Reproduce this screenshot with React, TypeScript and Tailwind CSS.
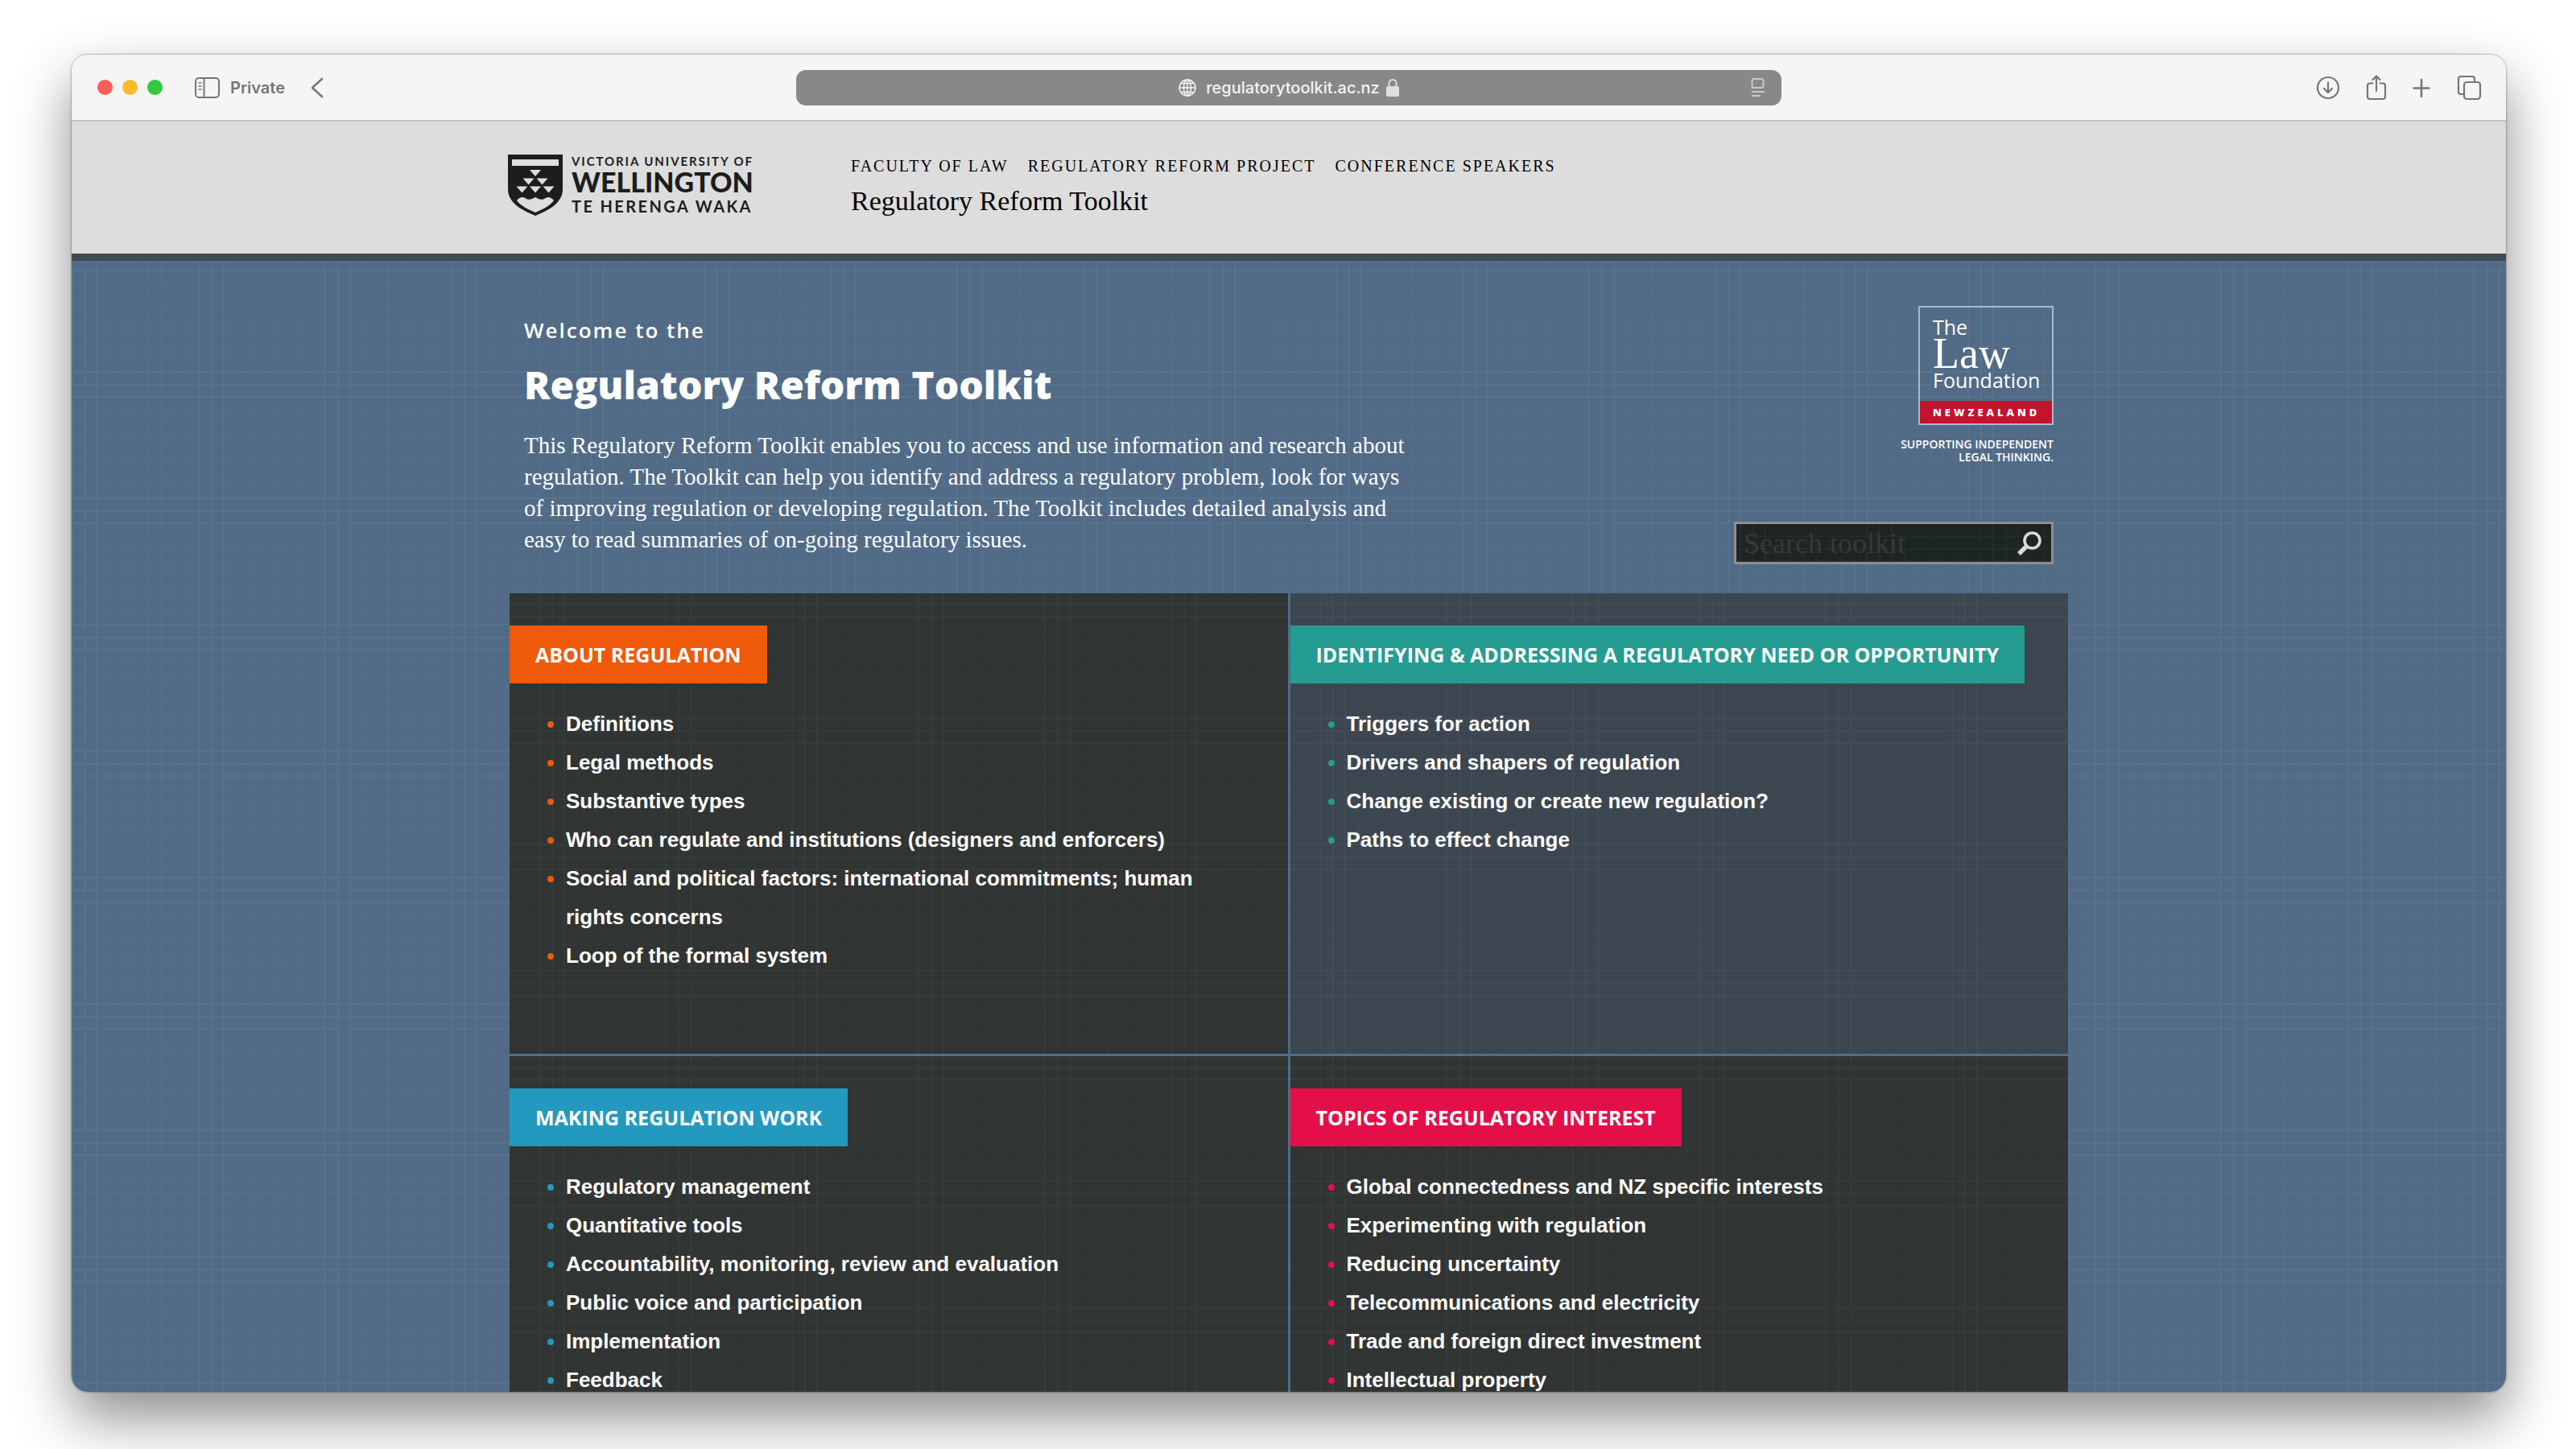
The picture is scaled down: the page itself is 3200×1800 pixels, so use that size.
import { ReactNode } from "react";

interface Topic {
    title: string;
    tag: string;
    dot: string;
    panel: string;
    items: string[];
}

const topics: Topic[] = [
    {
        title: "About regulation",
        tag: "bg-[#ee5a0a]",
        dot: "marker:text-[#ee5a0a]",
        panel: "bg-[#303433]",
        items: [
            "Definitions",
            "Legal methods",
            "Substantive types",
            "Who can regulate and institutions (designers and enforcers)",
            "Social and political factors: international commitments; human rights concerns",
            "Loop of the formal system",
        ],
    },
    {
        title: "Identifying & addressing a regulatory need or opportunity",
        tag: "bg-[#259c91]",
        dot: "marker:text-[#259c91]",
        panel: "bg-[#3c4650]",
        items: [
            "Triggers for action",
            "Drivers and shapers of regulation",
            "Change existing or create new regulation?",
            "Paths to effect change",
        ],
    },
    {
        title: "Making regulation work",
        tag: "bg-[#2499c0]",
        dot: "marker:text-[#2499c0]",
        panel: "bg-[#303433]",
        items: [
            "Regulatory management",
            "Quantitative tools",
            "Accountability, monitoring, review and evaluation",
            "Public voice and participation",
            "Implementation",
            "Feedback",
        ],
    },
    {
        title: "Topics of regulatory interest",
        tag: "bg-[#e40f49]",
        dot: "marker:text-[#e40f49]",
        panel: "bg-[#303433]",
        items: [
            "Global connectedness and NZ specific interests",
            "Experimenting with regulation",
            "Reducing uncertainty",
            "Telecommunications and electricity",
            "Trade and foreign direct investment",
            "Intellectual property",
        ],
    },
];

const navLinks = ["Faculty of Law", "Regulatory Reform Project", "Conference Speakers"];

function ToolButton({ label, children }: { label: string; children: ReactNode }) {
    return (
        <button type="button" aria-label={label} className="text-[#767676]">
            {children}
        </button>
    );
}

function Toolbar() {
    return (
        <div className="grid h-[83px] shrink-0 grid-cols-[1fr_1224px_1fr] items-center border-b-2 border-[#c4c4c4] bg-[#f5f5f5] font-[Inter] text-[#767676]">
            <div className="flex items-center pl-8">
                <div className="flex gap-3">
                    <span className="size-[19px] rounded-full bg-[#fa5e57]" />
                    <span className="size-[19px] rounded-full bg-[#fcbb2e]" />
                    <span className="size-[19px] rounded-full bg-[#35c83f]" />
                </div>
                <button type="button" className="ml-10 flex items-center gap-3 text-xl font-semibold">
                    <svg width="32" height="26" viewBox="0 0 32 26" fill="none" stroke="currentColor" strokeWidth="2">
                        <rect x="1" y="1" width="29" height="24" rx="4" />
                        <path d="M11.500 1v24" />
                        <path d="M4.500 7h4M4.500 11h4M4.500 15h4" strokeWidth="1.500" />
                    </svg>
                    Private
                </button>
                <div className="ml-8 flex">
                    <ToolButton label="Back">
                        <svg width="16" height="26" viewBox="0 0 16 26" fill="none" stroke="currentColor" strokeWidth="2.600" strokeLinecap="round" strokeLinejoin="round">
                            <path d="M14 2 2 13l12 11" />
                        </svg>
                    </ToolButton>
                </div>
            </div>
            <div className="grid h-11 grid-cols-[1fr_auto_1fr] items-center rounded-xl bg-[#888888] px-5 text-[#f4f4f4]">
                <span />
                <div className="flex items-center gap-2">
                    <svg className="mr-1" width="22" height="22" viewBox="0 0 22 22" fill="none" stroke="currentColor" strokeWidth="1.500">
                        <circle cx="11" cy="11" r="10" />
                        <ellipse cx="11" cy="11" rx="4.500" ry="10" />
                        <path d="M11 1v20M1 11h20M3 5.500h16M3 16.500h16" />
                    </svg>
                    <span className="text-xl font-medium">regulatorytoolkit.ac.nz</span>
                    <svg className="text-[#dedede]" width="16" height="24" viewBox="0 0 16 24" fill="currentColor">
                        <rect y="10" width="16" height="13" rx="2" />
                        <path d="M3.500 10V6.500a4.500 4.500 0 0 1 9 0V10" fill="none" stroke="currentColor" strokeWidth="2" />
                    </svg>
                </div>
                <button type="button" aria-label="Page menu" className="justify-self-end text-[#c8c8c8]">
                    <svg width="18" height="24" viewBox="0 0 18 24" fill="none" stroke="currentColor" strokeWidth="2">
                        <rect x="1.500" y="1" width="14" height="11" rx="2.500" />
                        <path d="M1 17h16M1 22h11" />
                    </svg>
                </button>
            </div>
            <div className="flex items-center justify-end gap-8 pr-[30px]">
                <ToolButton label="Downloads">
                    <svg width="30" height="30" viewBox="0 0 30 30" fill="none" stroke="currentColor" strokeWidth="2.200" strokeLinecap="round" strokeLinejoin="round">
                        <circle cx="15" cy="15" r="13" />
                        <path d="M15 8.500v12M10 16l5 5 5-5" />
                    </svg>
                </ToolButton>
                <ToolButton label="Share">
                    <svg width="26" height="32" viewBox="0 0 26 32" fill="none" stroke="currentColor" strokeWidth="2.200" strokeLinecap="round" strokeLinejoin="round">
                        <path d="M8.500 10.500H5A3 3 0 0 0 2 13.500V27a3 3 0 0 0 3 3h16a3 3 0 0 0 3-3V13.500a3 3 0 0 0-3-3h-3.500" />
                        <path d="M13 20V2M8.500 6 13 1.500 17.500 6" />
                    </svg>
                </ToolButton>
                <ToolButton label="New tab">
                    <svg width="22" height="24" viewBox="0 0 22 24" fill="none" stroke="currentColor" strokeWidth="2.600" strokeLinecap="round">
                        <path d="M11 2v21M1.500 12.500h19" />
                    </svg>
                </ToolButton>
                <ToolButton label="Tab overview">
                    <svg width="32" height="32" viewBox="0 0 32 32" fill="none" stroke="currentColor" strokeWidth="2.200">
                        <rect x="10" y="9" width="20" height="21" rx="3.500" />
                        <path d="M9.500 24H6a3 3 0 0 1-3-3V5a3 3 0 0 1 3-3h14a3 3 0 0 1 3 3v3.500" />
                    </svg>
                </ToolButton>
            </div>
        </div>
    );
}

function UniversityLogo() {
    return (
        <a href="#" aria-label="Victoria University of Wellington" className="block">
            <svg width="306" height="78" viewBox="0 0 306 78" fill="#1d1d1d" fontFamily="Lato, sans-serif">
                <path d="M0 0h68v43c0 17-17 26-34 33C17 69 0 60 0 43Z" />
                <path d="M5 6h58v8H5Z" fill="#dddddd" />
                <path d="M27 19h14l-7 8ZM18.500 29.500h14l-7 8ZM35.500 29.500h14l-7 8ZM10.500 39.500h14l-7 8ZM27 39.500h14l-7 8ZM43.500 39.500h14l-7 8Z" fill="#dddddd" />
                <path d="M11 57c4-5 8-5 12-2 4 2 7 0 11-2 4 2 7 4 11 2 4-3 8-3 12 2-5 7-14 11-23 15-9-4-18-8-23-15Z" fill="#dddddd" />
                <text x="79" y="14" fontSize="15" fontWeight="700" letterSpacing="1.900">VICTORIA UNIVERSITY OF</text>
                <text x="79" y="47" fontSize="34" fontWeight="900">WELLINGTON</text>
                <text x="79" y="72" fontSize="20" fontWeight="700" letterSpacing="2.400">TE HERENGA WAKA</text>
            </svg>
        </a>
    );
}

function LawFoundation() {
    return (
        <a href="#" className="flex flex-col items-end text-white">
            <span className="flex w-[168px] flex-col border-2 border-[#a9b8c9] font-['Open_Sans']">
                <span className="flex h-[116px] flex-col px-4 pt-[10px]">
                    <span className="text-[25px] leading-7">The</span>
                    <span className="font-['Liberation_Serif'] text-[54px] leading-[38px]">Law</span>
                    <span className="text-[25px] leading-7">Foundation</span>
                </span>
                <span className="h-7 bg-[#c4122f] pl-4 text-[13px] leading-7 font-extrabold tracking-[4px]">NEWZEALAND</span>
            </span>
            <span className="mt-4 text-right font-['Open_Sans'] text-sm leading-4 font-semibold">
                SUPPORTING INDEPENDENT
                <br />
                LEGAL THINKING.
            </span>
        </a>
    );
}

// graph-paper lines behind the content: groups of three stronger lines in every ten
function Weave({ id, x, y, tint }: { id: string; x: number; y: number; tint: string }) {
    return (
        <svg className={`pointer-events-none absolute inset-0 size-full ${tint}`} aria-hidden="true">
            <defs>
                <pattern id={id} x={x} y={y} width="157" height="157" patternUnits="userSpaceOnUse">
                    <path
                        d="M48 0v157M64 0v157M79 0v157M95 0v157M111 0v157M126 0v157M142 0v157M0 48h157M0 64h157M0 79h157M0 95h157M0 111h157M0 126h157M0 142h157"
                        stroke="currentColor"
                        strokeOpacity="0.400"
                        strokeWidth="2"
                    />
                    <path d="M1 0v157M17 0v157M32 0v157M0 1h157M0 17h157M0 32h157" stroke="currentColor" strokeWidth="2" />
                </pattern>
            </defs>
            <rect width="100%" height="100%" fill={`url(#${id})`} />
        </svg>
    );
}

function SearchBox() {
    return (
        <form className="relative flex h-[53px] w-[397px] items-center border-[3px] border-[#8d8f91] bg-[#1c2523] pl-[9px] pr-3">
            <Weave id="weave-search" x={4} y={14} tint="text-white/3" />
            <label htmlFor="search" className="sr-only">
                Search toolkit
            </label>
            <input
                type="text"
                id="search"
                name="search"
                placeholder="Search toolkit"
                className="relative h-11 min-w-0 flex-1 bg-transparent font-['Liberation_Serif'] text-4xl leading-[42px] text-white outline-none placeholder:text-[#363a39]"
            />
            <button type="submit" aria-label="Search" className="relative text-[#d9dcdb]">
                <svg width="30" height="30" viewBox="0 0 30 30" fill="none" stroke="currentColor">
                    <circle cx="18.500" cy="11.500" r="9.500" strokeWidth="3.600" />
                    <path d="m12 18-10 10" strokeWidth="5.500" />
                </svg>
            </button>
        </form>
    );
}

function TopicPanel({ topic, index }: { topic: Topic; index: number }) {
    return (
        <section className={`relative flex min-h-[572px] flex-col items-start pt-10 ${topic.panel}`}>
            <Weave id={`weave-panel-${index}`} x={36} y={154} tint="text-white/3" />
            <h2 className={`relative px-8 font-['Open_Sans'] text-[25px] leading-[72px] font-bold text-white uppercase ${topic.tag}`}>
                {topic.title}
            </h2>
            <ul className={`relative mt-[26px] list-disc pr-16 pl-[70px] font-['Liberation_Sans'] text-[26px] leading-[48px] font-bold text-white ${topic.dot}`}>
                {topic.items.map((item) => (
                    <li key={item}>
                        <a href="#">{item}</a>
                    </li>
                ))}
            </ul>
        </section>
    );
}

export default function App() {
    return (
        <div className="h-screen bg-white pt-[68px] pr-[87px] pb-[71px] pl-[89px]">
            <div className="flex h-full flex-col overflow-hidden rounded-[20px] shadow-[0_0_2px_1px_rgba(0,0,0,0.25),0_32px_70px_rgba(0,0,0,0.45)]">
                <Toolbar />
                <header className="shrink-0 border-b-[9px] border-[#3f4a52] bg-[#dddddd]">
                    <div className="mx-auto flex h-[164px] max-w-[1940px] items-start gap-[120px] pt-[41px]">
                        <UniversityLogo />
                        <div className="font-['Liberation_Serif'] text-black">
                            <nav className="flex gap-6 text-xl leading-7 tracking-[2px] uppercase">
                                {navLinks.map((link) => (
                                    <a key={link} href="#">
                                        {link}
                                    </a>
                                ))}
                            </nav>
                            <p className="mt-[10px] text-[34px] leading-10">Regulatory Reform Toolkit</p>
                        </div>
                    </div>
                </header>
                <main className="relative min-h-0 flex-1 overflow-hidden bg-[#516b87]">
                    <Weave id="weave-page" x={0} y={137} tint="text-[#8aa0b4]/12" />
                    <div className="relative mx-auto max-w-[1936px]">
                        <div className="flex justify-between px-[18px] pt-14">
                            <div className="w-[1110px] text-white">
                                <h1 className="font-['Open_Sans'] font-bold">
                                    <span className="block pt-[10px] text-[26px] leading-10 font-semibold tracking-[2px]">Welcome to the</span>
                                    <span className="mt-3 block text-5xl leading-[72px] font-extrabold">Regulatory Reform Toolkit</span>
                                </h1>
                                <p className="mt-5 pb-[11px] font-['Liberation_Serif'] text-[29px] leading-[39px]">
                                    This Regulatory Reform Toolkit enables you to access and use information and research about regulation. The Toolkit can help you identify and address a regulatory problem, look for ways of improving regulation or developing regulation. The Toolkit includes detailed analysis and easy to read summaries of on-going regulatory issues.
                                </p>
                            </div>
                            <div className="flex flex-col items-end justify-between">
                                <LawFoundation />
                                <SearchBox />
                            </div>
                        </div>
                        <div className="mt-9 grid grid-cols-2 gap-[3px]">
                            {topics.map((topic, index) => (
                                <TopicPanel key={topic.title} topic={topic} index={index} />
                            ))}
                        </div>
                    </div>
                </main>
            </div>
        </div>
    );
}
